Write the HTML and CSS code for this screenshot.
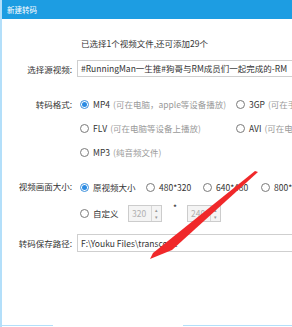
FILE: index.html
```html
<!DOCTYPE html>
<html>
<head>
    <title>新建转码</title>
    <link rel="stylesheet" href="styles.css">
</head>

<body>

    <div class="dialog">
        <div class="title-bar">新建转码</div>

        <p class="info">已选择1个视频文件,还可添加29个</p>

        <div class="row source-row">
            <span class="label">选择源视频:</span>
            <div class="text-box">#RunningMan一生推#狗哥与RM成员们一起完成的-RM</div>
        </div>

        <!-- 转码格式 -->
        <div class="row format-row">
            <span class="label">转码格式:</span>
            <div class="format-grid">
                <div class="option"><span class="radio checked"></span>MP4 <span class="hint">(可在电脑，apple等设备播放)</span></div>
                <div class="option"><span class="radio"></span>3GP <span class="hint">(可在手机上播放)</span></div>
                <div class="option"><span class="radio"></span>FLV <span class="hint">(可在电脑等设备上播放)</span></div>
                <div class="option"><span class="radio"></span>AVI <span class="hint">(可在电脑上播放)</span></div>
                <div class="option"><span class="radio"></span>MP3 <span class="hint">(纯音频文件)</span></div>
            </div>
        </div>

        <!-- 视频画面大小 -->
        <div class="row size-row">
            <span class="label">视频画面大小:</span>
            <div class="size-options">
                <div class="size-line">
                    <div class="option size-1"><span class="radio checked"></span>原视频大小</div>
                    <div class="option size-2"><span class="radio"></span>480*320</div>
                    <div class="option size-3"><span class="radio"></span>640*480</div>
                    <div class="option"><span class="radio"></span>800*600</div>
                </div>
                <div class="size-line">
                    <div class="option custom"><span class="radio"></span>自定义</div>
                    <div class="spin-box">
                        <span class="spin-value">320</span>
                        <span class="spin-buttons"><span>▴</span><span>▾</span></span>
                    </div>
                    <span class="times">*</span>
                    <div class="spin-box">
                        <span class="spin-value">240</span>
                        <span class="spin-buttons"><span>▴</span><span>▾</span></span>
                    </div>
                </div>
            </div>
        </div>

        <div class="row path-row">
            <span class="label">转码保存路径:</span>
            <div class="text-box">F:\Youku Files\transcode</div>
        </div>

        <div class="footer">
            <div class="footer-left"></div>
            <div class="footer-right"></div>
        </div>

        <!-- 红色箭头标注 -->
        <svg class="arrow" width="292" height="327" viewBox="0 0 292 327">
            <polygon points="255,171 258,172 172,250 150,259 153,253" fill="#f0282a"/>
        </svg>
    </div>

</body>
</html>
```

FILE: styles.css
```css
body {
    margin: 0;
    padding: 0;
    background-color: #ffffff;
    font-family: "Noto Sans CJK SC", "Noto Sans", sans-serif;
    font-size: 8.5px;
    color: #333333;
}

.dialog {
    position: relative;
    width: 290px;
    height: 327px;
    border-left: 2px solid #b3dffa;
    display: flex;
    flex-direction: column;
    overflow: hidden;
}

.title-bar {
    height: 19px;
    margin-left: -2px;
    padding-left: 7px;
    background-color: #1d9de2;
    color: #ffffff;
    font-size: 7.5px;
    line-height: 19px;
}

.info {
    margin: 18px 0 0 79px;
    height: 12px;
    line-height: 12px;
}

.row {
    display: flex;
}

.label {
    width: 70px;
    flex-shrink: 0;
    text-align: right;
    padding-right: 3px;
}

.source-row {
    margin-top: 11px;
    height: 17px;
    align-items: center;
}

.text-box {
    margin-left: 2px;
    height: 17px;
    width: 260px;
    flex-shrink: 0;
    border: 1px solid #cfcfcf;
    box-sizing: border-box;
    padding-left: 3px;
    line-height: 15px;
    white-space: nowrap;
    overflow: hidden;
}

.format-row {
    margin-top: 15px;
}

.format-row .label,
.size-row .label {
    line-height: 24px;
}

.format-grid {
    display: grid;
    grid-template-columns: 156px 120px;
    grid-auto-rows: 24px;
    margin-left: 5px;
}

.option {
    display: flex;
    align-items: center;
    white-space: nowrap;
    height: 24px;
}

.hint {
    color: #9a9a9a;
    margin-left: 3px;
}

.radio {
    width: 9px;
    height: 9px;
    box-sizing: border-box;
    border: 1px solid #7a7a7a;
    border-radius: 50%;
    margin-right: 4px;
    flex-shrink: 0;
    display: flex;
    align-items: center;
    justify-content: center;
}

.radio.checked {
    border-color: #3b8fdc;
}

.radio.checked::after {
    content: "";
    width: 5px;
    height: 5px;
    border-radius: 50%;
    background-color: #2b8be3;
}

.size-row {
    margin-top: 10px;
}

.size-options {
    margin-left: 5px;
}

.size-line {
    display: flex;
    align-items: center;
    height: 26px;
}

.size-line .option {
    height: 26px;
}

.size-1 {
    width: 66px;
}

.size-2 {
    width: 57px;
}

.size-3 {
    width: 58px;
}

.custom {
    width: 48px;
}

.spin-box {
    width: 34px;
    height: 17px;
    box-sizing: border-box;
    border: 1px solid #cccccc;
    background-color: #f4f4f4;
    display: flex;
    color: #b0b0b0;
}

.spin-value {
    flex: 1;
    padding-left: 3px;
    line-height: 15px;
}

.spin-buttons {
    width: 9px;
    border-left: 1px solid #d6d6d6;
    display: flex;
    flex-direction: column;
    font-size: 5px;
    line-height: 7px;
    text-align: center;
    color: #999999;
}

.times {
    width: 25px;
    padding-left: 11px;
    box-sizing: border-box;
    align-self: flex-start;
    line-height: 14px;
}

.path-row {
    margin-top: 8px;
    height: 18px;
    align-items: center;
}

.path-row .text-box {
    height: 18px;
    line-height: 16px;
}

.footer {
    margin-top: auto;
    margin-bottom: 1px;
    display: flex;
    justify-content: space-between;
    margin-left: -2px;
}

.footer-left {
    width: 53px;
    height: 1px;
    background-color: #b3dffa;
}

.footer-right {
    width: 109px;
    height: 1px;
    background-color: #b3dffa;
}

/* 标注箭头盖在表单上面 */
.arrow {
    position: absolute;
    top: 0;
    left: -2px;
}
```
